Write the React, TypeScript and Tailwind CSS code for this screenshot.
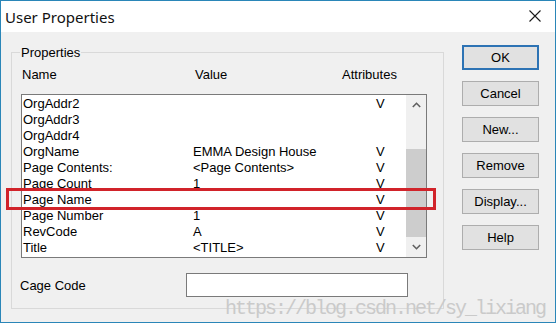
import React from "react";

const rows: [string, string, string][] = [
  ["OrgAddr2", "", "V"],
  ["OrgAddr3", "", ""],
  ["OrgAddr4", "", ""],
  ["OrgName", "EMMA Design House", "V"],
  ["Page Contents:", "<Page Contents>", "V"],
  ["Page Count", "1", "V"],
  ["Page Name", "", "V"],
  ["Page Number", "1", "V"],
  ["RevCode", "A", "V"],
  ["Title", "<TITLE>", "V"],
];

const buttons = ["OK", "Cancel", "New...", "Remove", "Display...", "Help"];

export default function App() {
  return (
    <div
      className="relative w-[556px] h-[323px] border border-[#2a86b8] flex flex-col overflow-hidden text-black"
      style={{ fontFamily: '"Liberation Sans", Arial, sans-serif' }}
    >
      {/* Title bar */}
      <div className="h-[31px] bg-white flex items-center justify-between pl-[4px] pr-[14px]">
        <span
          className="text-[15px] leading-none text-[#111] pt-[1px]"
          style={{ fontFamily: '"Noto Sans", "Open Sans", sans-serif' }}
        >
          User Properties
        </span>
        <svg width="12" height="12" viewBox="0 0 12 12" className="mb-[1px]">
          <path d="M0.5 0.5 L11.5 11.5 M11.5 0.5 L0.5 11.5" stroke="#1a1a1a" strokeWidth="1.1" fill="none" />
        </svg>
      </div>

      {/* Body */}
      <div className="flex-1 bg-[#f0f0f0] flex items-start pl-[10px] text-[13px] leading-[16px]">
        {/* Group box */}
        <div className="relative mt-[20px] w-[433px] h-[257px] border border-[#d9d9d9]">
          <span className="absolute left-[8px] top-[-8px] px-[1px] bg-[#f0f0f0] leading-[16px]">Properties</span>
          <div className="pt-[14px] pl-[9px] flex flex-col">
            <div className="flex h-[16px] pl-[1px]">
              <span className="w-[173px]">Name</span>
              <span className="w-[147px]">Value</span>
              <span>Attributes</span>
            </div>
            <div className="mt-[11px] w-[406px] h-[164px] border border-[#7a7a7a] bg-white flex">
              <div className="flex-1 flex flex-col pl-[1px] pt-[1px]">
                {rows.map(([n, v, a]) => (
                  <div key={n} className="flex h-[16px] whitespace-nowrap">
                    <span className="w-[170px]">{n}</span>
                    <span className="w-[183px]">{v}</span>
                    <span>{a}</span>
                  </div>
                ))}
              </div>
              {/* Scrollbar */}
              <div className="w-[20px] bg-[#f0f0f0] flex flex-col">
                <div className="h-[20px] flex items-center justify-center">
                  <svg width="9" height="6" viewBox="0 0 9 6">
                    <path d="M0.8 5 L4.5 1.3 L8.2 5" stroke="#606060" strokeWidth="1.6" fill="none" />
                  </svg>
                </div>
                <div className="flex-1 flex flex-col justify-end">
                  <div className="h-[88px] bg-[#cdcdcd]" />
                </div>
                <div className="h-[20px] flex items-center justify-center">
                  <svg width="9" height="6" viewBox="0 0 9 6">
                    <path d="M0.8 1 L4.5 4.7 L8.2 1" stroke="#606060" strokeWidth="1.6" fill="none" />
                  </svg>
                </div>
              </div>
            </div>
            <div className="mt-[15px] flex items-center">
              <span className="w-[166px] -ml-[1px] pt-[1px]">Cage Code</span>
              <div className="w-[222px] h-[24px] border border-[#7a7a7a] bg-white" />
            </div>
          </div>
        </div>

        {/* Buttons */}
        <div className="ml-[18px] mt-[13px] flex flex-col gap-[11px]">
          {buttons.map((b) => (
            <div
              key={b}
              className={
                b === "OK"
                  ? "w-[77px] h-[25px] bg-[#e1e1e1] border-2 border-[#2d73b4] flex items-center justify-center"
                  : "w-[77px] h-[25px] bg-[#e1e1e1] border border-[#adadad] flex items-center justify-center"
              }
            >
              {b}
            </div>
          ))}
        </div>
      </div>

      {/* Red annotation box */}
      <div className="absolute left-[5px] top-[187px] w-[430px] h-[22px] border-[3px] border-[#d1232a]" />

      {/* Watermark */}
      <div
        className="absolute left-[224px] top-[298px] text-[20px] leading-none tracking-[-2px] text-[#cacaca] whitespace-nowrap"
        style={{ fontFamily: '"Liberation Mono", "DejaVu Sans Mono", monospace' }}
      >
        https://blog.csdn.net/sy_lixiang
      </div>
    </div>
  );
}
